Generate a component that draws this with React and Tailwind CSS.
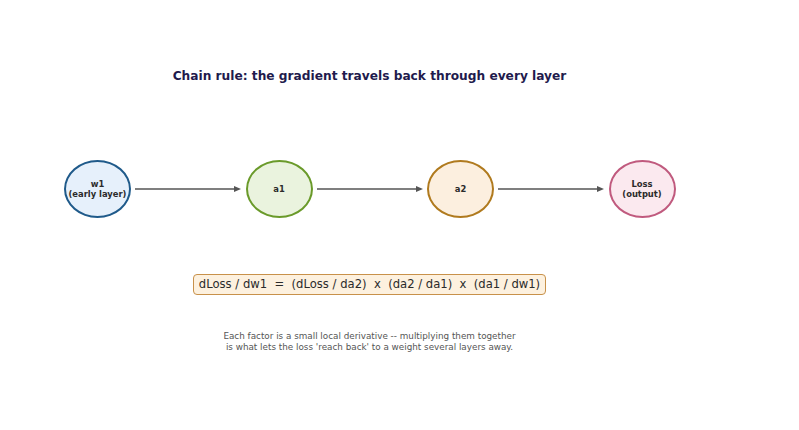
const nodes = [
    { label: ['w1', '(early layer)'], bg: 'bg-[#e6f0fb]', border: 'border-[#1f5a8a]' },
    { label: ['a1'], bg: 'bg-[#eaf3de]', border: 'border-[#6a9a2a]' },
    { label: ['a2'], bg: 'bg-[#fcefdf]', border: 'border-[#b07a1e]' },
    { label: ['Loss', '(output)'], bg: 'bg-[#fbe9ef]', border: 'border-[#c05a7e]' },
];

const Arrow = () => (
    <svg width="114.5" height="10" viewBox="0 0 114.5 10" className="shrink-0">
        <line x1="4" y1="5" x2="105" y2="5" stroke="#555" strokeWidth="1.5" />
        <path d="M103 2 L110 5 L103 8 Z" fill="#555" />
    </svg>
);

const Node = ({ label, bg, border }) => (
    <div className={`flex h-[58px] w-[67px] shrink-0 flex-col items-center justify-center rounded-[50%] border-2 ${bg} ${border}`}>
        {label.map((l) => (
            <span key={l} className="text-[8.4px] font-bold leading-[10px] text-[#2b2b2b]">{l}</span>
        ))}
    </div>
);

const App = () => {
    return (
        <div className="flex h-[430px] w-[799px] flex-col bg-white font-['DejaVu_Sans',sans-serif]">
            <h1 className="mt-[69px] w-[739px] text-center text-[12.2px] font-bold leading-[15px] text-[#1f1b4d]">
                Chain rule: the gradient travels back through every layer
            </h1>

            <div className="mt-[76px] flex items-center pl-[64px]">
                {nodes.map((n, i) => (
                    <div key={i} className="flex items-center">
                        <Node {...n} />
                        {i < nodes.length - 1 && <Arrow />}
                    </div>
                ))}
            </div>

            <div className="mt-[56px] flex pl-[193px]">
                <div className="flex h-[21px] w-[353px] items-center justify-center rounded-[4px] border border-[#c8914a] bg-[#fdf1df]">
                    <span className="whitespace-pre text-[11.6px] leading-none text-[#2b2b2b]">
                        dLoss / dw1  =  (dLoss / da2)  x  (da2 / da1)  x  (da1 / dw1)
                    </span>
                </div>
            </div>

            <div className="mt-[36px] flex w-[739px] flex-col items-center text-[8.8px] leading-[11px] text-[#555]">
                <span>Each factor is a small local derivative -- multiplying them together</span>
                <span>is what lets the loss 'reach back' to a weight several layers away.</span>
            </div>
        </div>
    );
};

export default App;
